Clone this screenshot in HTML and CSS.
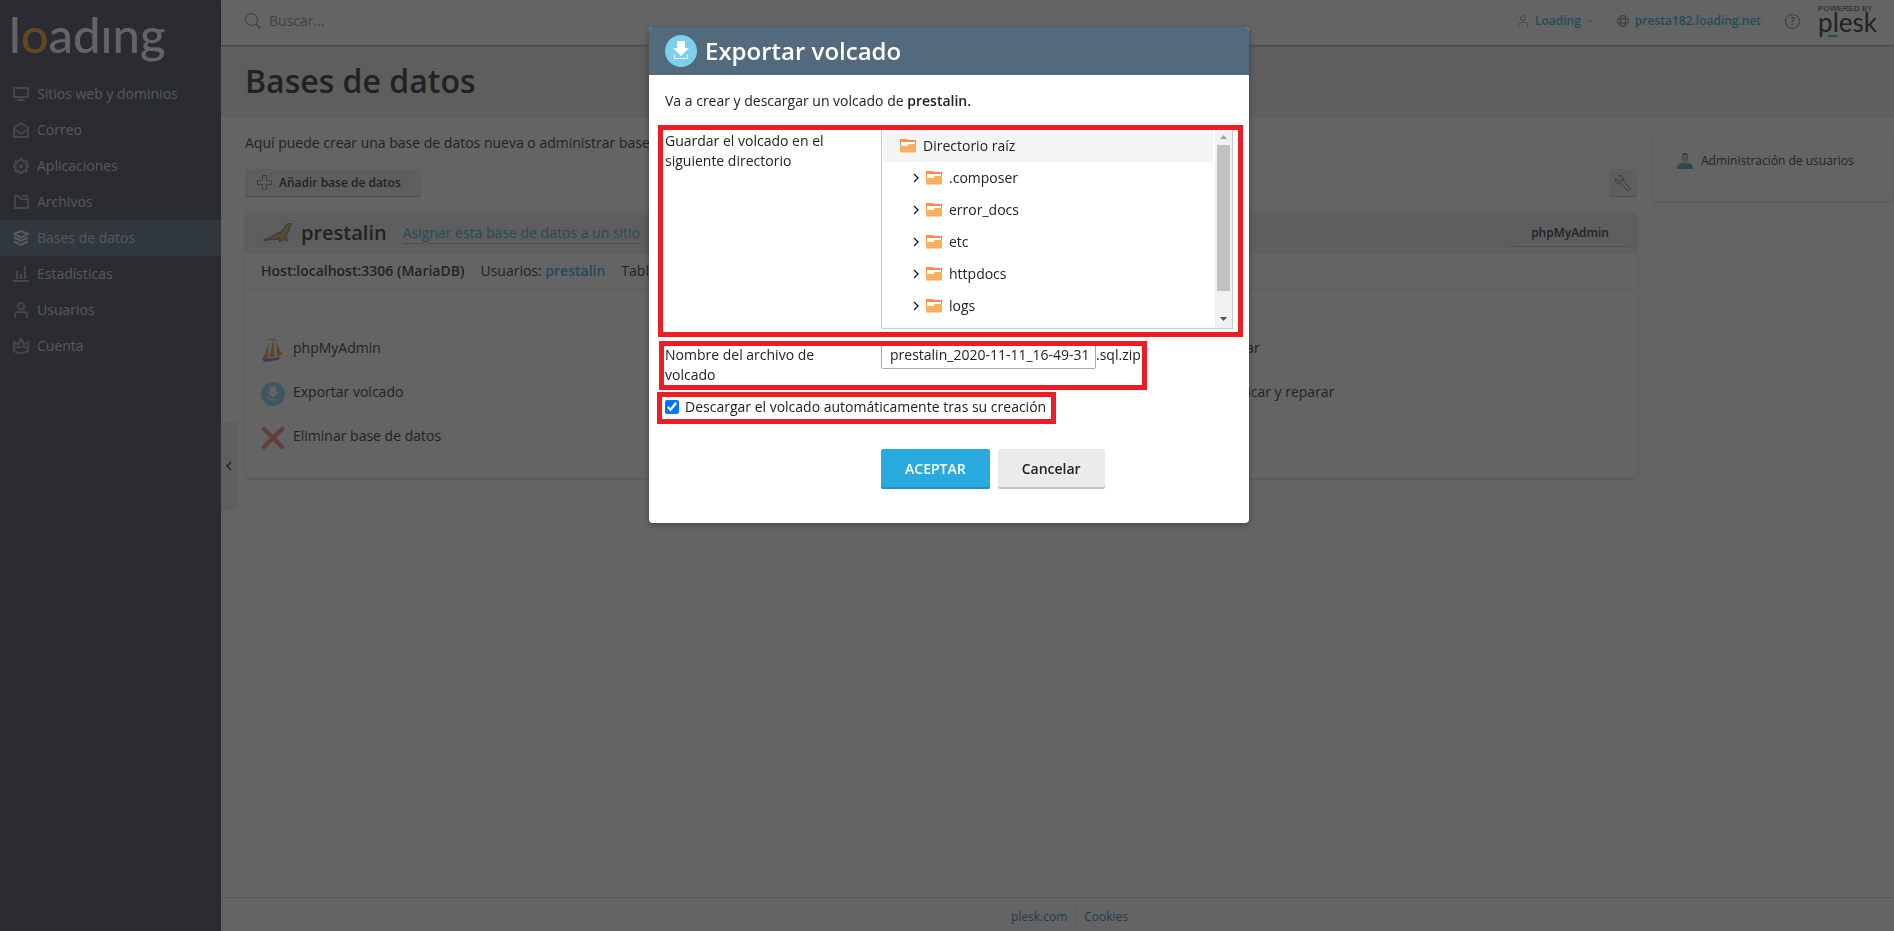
FILE: index.html
```html
<!DOCTYPE html>
<html lang="es">
  <head>
    <meta charset="UTF-8" />
    <meta name="viewport" content="width=device-width, initial-scale=1.0" />
    <title>Bases de datos - Plesk</title>
    <link rel="stylesheet" href="styles.css">
  </head>

  <body>
    <!-- shared icons -->
    <svg class="sprite" aria-hidden="true">
      <symbol id="download" viewBox="0 0 32 32">
        <circle cx="16" cy="16" r="16" fill="#7dcfee" />
        <path d="M12 6h8v7h4l-8 8-8-8h4z" fill="#fff" />
        <path d="M9.500 19.500v4h13v-4" fill="none" stroke="#fff" />
      </symbol>
      <symbol id="folder" viewBox="0 0 16 14">
        <path d="M0 0h7l1 1h8v6H0z" fill="#f98b53" />
        <path d="M1 3h14v4H1z" fill="#fff" />
        <path d="M0 7h7l2-2h7v8.500H0z" fill="#ffae5c" />
      </symbol>
      <symbol id="chevron" viewBox="0 0 6 10">
        <path d="M1 1l4 4-4 4" fill="none" stroke="#222" stroke-width="1.400" />
      </symbol>
      <symbol id="person" viewBox="0 0 16 16">
        <circle cx="8" cy="4" r="3.300" />
        <path d="M2 16v-2.500c0-2 1.500-3.500 3.500-3.500h5c2 0 3.500 1.500 3.500 3.500V16" />
      </symbol>
    </svg>

    <div class="page">
      <aside class="sidebar">
        <a class="logo" href="#">l<span class="logo-ring">o</span>adıng</a>
        <nav class="nav">
          <a class="nav-item" href="#">
            <svg class="nav-icon" viewBox="0 0 16 16"><path d="M1 2h14v9H1zM4 14h8" /></svg>Sitios web y dominios</a>
          <a class="nav-item" href="#">
            <svg class="nav-icon" viewBox="0 0 16 16"><path d="M1 15V5.500L8 1l7 4.500V15zM1 7l7 5 7-5" /></svg>Correo</a>
          <a class="nav-item" href="#">
            <svg class="nav-icon" viewBox="0 0 16 16"><path d="M7 1h2l.5 2 1.500.6L13 2.500 14 4l-1.200 1.500.7 1.500 1.900.3v1.900l-2 .3-.6 1.500L14 12.500 12.600 14l-1.600-1.100-1.500.6L9 15.300H7l-.5-1.800-1.500-.6L3.400 14 2 12.500l1.200-1.500-.6-1.500-2-.3V7.300l2-.3.6-1.500L2 4l1.300-1.500L5 3.600 6.500 3z" /><circle cx="8" cy="8.200" r="1" /></svg>Aplicaciones</a>
          <a class="nav-item" href="#">
            <svg class="nav-icon" viewBox="0 0 16 16"><path d="M2 2h4l2 3h7v9H2zM9 2h6" /></svg>Archivos</a>
          <a class="nav-item active" href="#">
            <svg class="nav-icon" viewBox="0 0 16 16"><path d="M8 1l7 3-7 3.500L1 4zM1 7.500L8 11l7-3.500M1 11.500L8 15l7-3.500" /></svg>Bases de datos</a>
          <a class="nav-item" href="#">
            <svg class="nav-icon" viewBox="0 0 16 16"><path d="M0 15h16M4 13V5M8 13V8M12 13V0" /></svg>Estadísticas</a>
          <a class="nav-item" href="#">
            <svg class="nav-icon" viewBox="0 0 16 16"><use href="#person" /></svg>Usuarios</a>
          <a class="nav-item" href="#">
            <svg class="nav-icon" viewBox="0 0 16 16"><path d="M1 13V4l4 2.500L8 1l3 5.500L15 4v9c-3 2.700-11 2.700-14 0zM1 10.500c4-2 10-2 14 0" /></svg>Cuenta</a>
        </nav>
      </aside>

      <div class="main">
        <button class="collapse" aria-label="Contraer">
          <svg width="6" height="10" viewBox="0 0 6 10"><path d="M5 1L1 5l4 4" fill="none" stroke="#222" stroke-width="1.400" /></svg>
        </button>

        <header class="topbar">
          <label class="search">
            <svg class="icon" width="16" height="16" viewBox="0 0 16 16"><circle cx="6.500" cy="6.500" r="6" /><path d="M10.500 11l4 4.500 1-1-4.500-4" /></svg>
            <input type="search" placeholder="Buscar..." aria-label="Buscar">
          </label>
          <div class="account">
            <a class="account-link user" href="#">
              <svg class="icon" width="12" height="12" viewBox="0 0 16 16"><use href="#person" /></svg>
              Loading
              <svg class="icon" width="6" height="4" viewBox="0 0 6 4"><path d="M.5.500L3 3 5.500.500" /></svg>
            </a>
            <a class="account-link" href="#">
              <svg class="icon" width="12" height="12" viewBox="0 0 12 12"><circle cx="6" cy="6" r="5.500" /><ellipse cx="6" cy="6" rx="2.500" ry="5.500" /><path d="M1 4h10M1 8h10" /></svg>
              presta182.loading.net
            </a>
            <a class="help" href="#" aria-label="Ayuda">?</a>
            <a class="plesk" href="#"><small>POWERED BY</small><span>plesk</span></a>
          </div>
        </header>

        <div class="title-band">
          <h1>Bases de datos</h1>
        </div>

        <div class="content">
          <main class="databases">
            <p class="intro">Aquí puede crear una base de datos nueva o administrar bases de datos existentes.</p>
            <div class="toolbar">
              <button class="btn-small">
                <svg class="icon" width="16" height="16" viewBox="0 0 16 16"><path d="M5.500.500h4v5h5v4h-5v5h-4v-5h-5v-4h5z" /></svg>
                Añadir base de datos
              </button>
              <button class="btn-small btn-icon" aria-label="Ajustes">
                <svg class="icon" width="18" height="18" viewBox="0 0 18 18"><path d="M5 1.500l3 3L7.500 7 5 7.500l-3.500-3C.5 8 3.500 10.500 7 9.500l6 6.500c2 1.500 4-.5 2.500-2.500L9.500 7.500C10.500 3.500 8.500 1 5 1.500z" /></svg>
              </button>
            </div>

            <section class="card">
              <div class="card-head">
                <svg width="30" height="20" viewBox="0 0 30 20"><path d="M.5 17C3 15.500 6 15.500 8 14c4-3.500 9-4 12-7 2-2 2-5 4-6 1.500-.6 3-.6 5-.6-.3 1.600-1.600 2-2.300 3.600-.7 3.500-1.700 7-3.700 9.500l1.500 4c-1.500.3-2.800-.7-3.500-2-1 1.500-2.500 3-5 3.500l1-3c-4 .7-7 .2-10 .7-2 .5-4 1.300-6.500.3z" fill="#d6a26c" stroke="#40566b" stroke-width=".8" /></svg>
                <h2>prestalin</h2>
                <a class="assign" href="#">Asignar esta base de datos a un sitio</a>
                <button class="btn-small btn-admin">phpMyAdmin</button>
              </div>
              <div class="card-info">
                <b>Host:localhost:3306 (MariaDB)</b>
                <span>Usuarios: <a href="#">prestalin</a></span>
                <span>Tablas: 0</span>
              </div>
              <div class="actions">
                <a class="action" href="#">
                  <svg width="24" height="24" viewBox="0 0 24 24"><path d="M8 4l-1 16H2C4 15 6 10 8 4zM12 1l2 18H8c2-6 3-12 4-18zM15 3c2 6 4 10 7 13l-6 3z" fill="#e8994a" /><path d="M7 2l5-1M12 1l4 2" stroke="#999" /><path d="M1 20c8 1 12 0 19-1l-3 3-14 2z" fill="#7478c4" /></svg>
                  phpMyAdmin</a>
                <a class="action action-last" href="#">
                  <svg width="24" height="24" viewBox="0 0 24 24"><path d="M3 3h12v14H3zM9 7h12v14H9z" fill="#7dcfee" /></svg>
                  Copiar</a>
                <a class="action" href="#">
                  <svg width="24" height="24"><use href="#download" /></svg>
                  Exportar volcado</a>
                <a class="action action-last" href="#">
                  <svg width="24" height="24" viewBox="0 0 24 24"><path d="M4 12l6 6L20 6" fill="none" stroke="#7dcfee" stroke-width="4" /></svg>
                  Verificar y reparar</a>
                <a class="action" href="#">
                  <svg width="24" height="24" viewBox="0 0 24 24"><path d="M3 3l18 18M21 3L3 21" stroke="#f58078" stroke-width="4.500" stroke-linecap="round" /></svg>
                  Eliminar base de datos</a>
              </div>
            </section>
          </main>

          <aside class="side-card">
            <a class="side-link" href="#">
              <svg width="16" height="16" viewBox="0 0 16 16"><path d="M0 16c0-4 2-5.500 5-6h6c3 .5 5 2 5 6z" fill="#3aa5d0" /><path d="M5 3h6v5l-1.500 2v1h-3v-1L5 8z" fill="#e5b694" /><path d="M5 4c-.5-5 6.500-5 6 0l-1-2H6z" fill="#62422f" /></svg>
              Administración de usuarios</a>
          </aside>
        </div>

        <footer class="footer">
          <a href="#">plesk.com</a>
          <a href="#">Cookies</a>
        </footer>
      </div>
    </div>

    <div class="overlay">
      <form class="modal" role="dialog" aria-labelledby="modal-title">
        <div class="modal-head">
          <svg width="32" height="32"><use href="#download" /></svg>
          <h2 id="modal-title">Exportar volcado</h2>
        </div>
        <div class="modal-body">
          <p class="modal-text">Va a crear y descargar un volcado de <b>prestalin.</b></p>

          <div class="form-row marked mark-tree">
            <div class="form-label">Guardar el volcado en el siguiente directorio</div>
            <div class="tree">
              <ul class="tree-list">
                <li class="tree-item root"><svg width="16" height="14"><use href="#folder" /></svg>Directorio raíz</li>
                <li class="tree-item"><svg width="6" height="10"><use href="#chevron" /></svg><svg width="16" height="14"><use href="#folder" /></svg>.composer</li>
                <li class="tree-item"><svg width="6" height="10"><use href="#chevron" /></svg><svg width="16" height="14"><use href="#folder" /></svg>error_docs</li>
                <li class="tree-item"><svg width="6" height="10"><use href="#chevron" /></svg><svg width="16" height="14"><use href="#folder" /></svg>etc</li>
                <li class="tree-item"><svg width="6" height="10"><use href="#chevron" /></svg><svg width="16" height="14"><use href="#folder" /></svg>httpdocs</li>
                <li class="tree-item"><svg width="6" height="10"><use href="#chevron" /></svg><svg width="16" height="14"><use href="#folder" /></svg>logs</li>
              </ul>
              <div class="scrollbar">
                <svg width="7" height="4" viewBox="0 0 7 4"><path d="M0 4l3.500-4L7 4z" fill="#a3a3a3" /></svg>
                <div class="thumb"></div>
                <svg width="7" height="4" viewBox="0 0 7 4"><path d="M0 0h7L3.500 4z" fill="#505050" /></svg>
              </div>
            </div>
          </div>

          <div class="form-row marked mark-name">
            <label class="form-label" for="file-name">Nombre del archivo de volcado</label>
            <div class="file-field">
              <input class="file-name" id="file-name" type="text" value="prestalin_2020-11-11_16-49-31">
              <span>.sql.zip</span>
            </div>
          </div>

          <label class="check-row marked mark-check">
            <input type="checkbox" checked>
            Descargar el volcado automáticamente tras su creación
          </label>

          <div class="buttons">
            <button class="btn btn-primary" type="submit">ACEPTAR</button>
            <button class="btn" type="button">Cancelar</button>
          </div>
        </div>
      </form>
    </div>
  </body>
</html>
```

FILE: styles.css
```css
* {
  box-sizing: border-box;
}
body {
  margin: 0;
  font-family: 'Open Sans', sans-serif;
  font-size: 14px;
  line-height: 20px;
  color: #222;
  background-color: white;
}
h1,
h2,
p,
ul {
  margin: 0;
  padding: 0;
}
a {
  color: #28aade;
  text-decoration: none;
}
b {
  font-weight: 600;
}
svg {
  flex: none;
}
button,
input {
  font: inherit;
  color: inherit;
}
.sprite {
  position: absolute;
  width: 0;
  height: 0;
}
.icon {
  fill: none;
  stroke: #777;
}

.page {
  display: flex;
  min-height: 100vh;
}

/* sidebar */
.sidebar {
  width: 221px;
  flex: none;
  background-color: #3c4456;
}
.logo {
  display: block;
  height: 76px;
  padding-left: 9px;
  font-family: Lato, sans-serif;
  font-size: 49px;
  font-weight: 500;
  line-height: 68px;
  color: white;
}
.logo-ring {
  color: #f9a01b;
}
.nav-item {
  display: flex;
  align-items: center;
  gap: 8px;
  height: 36px;
  padding-left: 13px;
  color: #d5d7da;
}
.nav-icon {
  width: 16px;
  height: 16px;
  fill: none;
  stroke: #949aa4;
  stroke-width: 2;
}
.nav-item.active {
  background-color: #516a7c;
}
.active .nav-icon {
  stroke: #e0e0e0;
}

/* top bar */
.main {
  position: relative;
  display: flex;
  flex: 1;
  flex-direction: column;
}
.collapse {
  position: absolute;
  top: 50%;
  left: 0;
  width: 16px;
  height: 88px;
  padding: 0;
  transform: translateY(-50%);
  border: 0;
  border-radius: 0 3px 3px 0;
  background-color: #ebebeb;
}
.topbar {
  display: flex;
  justify-content: space-between;
  height: 45px;
  padding: 0 17px 0 24px;
  box-shadow: 0 1px 2px rgba(0, 0, 0, 0.4);
  z-index: 1;
}
.search {
  display: flex;
  align-items: center;
  gap: 8px;
  height: 42px;
}
.search input {
  border: 0;
  padding: 0;
  outline: 0;
  background: none;
}
.search input::placeholder {
  color: #888;
}
.account {
  display: flex;
  gap: 24px;
  font-size: 12px;
  font-weight: 600;
}
.account-link {
  display: flex;
  align-items: center;
  gap: 6px;
  height: 42px;
}
.help {
  width: 15px;
  height: 15px;
  margin-top: 14px;
  border: 1px solid #666;
  border-radius: 50%;
  font-size: 10px;
  line-height: 13px;
  text-align: center;
  color: #666;
}
.plesk {
  display: flex;
  flex-direction: column;
  margin-left: -6px;
  padding-top: 5px;
  font-family: Lato, sans-serif;
  font-weight: 400;
  color: #222;
}
.plesk small {
  font-family: 'Liberation Sans', sans-serif;
  font-size: 8px;
  line-height: 8px;
}
.plesk span {
  font-size: 26px;
  line-height: 18px;
}
.plesk::after {
  content: '';
  width: 10px;
  height: 2px;
  margin: 4px 0 0 10px;
  background-color: #28bcdc;
}

/* content */
.title-band {
  height: 72px;
  padding: 12px 24px;
  background-color: #ebebeb;
}
.title-band h1 {
  font-size: 32px;
  font-weight: 600;
  line-height: 48px;
}
.content {
  display: flex;
  flex: 1;
  align-items: flex-start;
  gap: 16px;
  padding: 16px 1px 16px 24px;
}
.databases {
  flex: 1;
}
.toolbar {
  display: flex;
  justify-content: space-between;
  margin: 16px 0;
}
.btn-small {
  display: flex;
  align-items: center;
  gap: 6px;
  height: 28px;
  padding: 0 20px 0 12px;
  border: 0;
  border-radius: 2px;
  font-size: 12px;
  font-weight: 600;
  background-color: #ebebeb;
  box-shadow: inset 0 -1px #bbb;
}
.btn-icon {
  padding: 0 5px;
}
.btn-admin {
  margin-left: auto;
  padding: 0 20px;
}
.card,
.side-card {
  border-radius: 4px;
  background-color: white;
  box-shadow: 0 1px 3px rgba(0, 0, 0, 0.2);
}
.card-head {
  display: flex;
  align-items: center;
  gap: 8px;
  height: 40px;
  padding: 0 8px 0 18px;
  border-radius: 4px 4px 0 0;
  background-color: #ebebeb;
}
.card-head h2 {
  font-size: 20px;
  font-weight: 600;
}
.assign {
  margin-left: 8px;
  border-bottom: 1px dotted #28aade;
}
.card-info {
  display: flex;
  gap: 16px;
  padding: 8px 16px;
  border-bottom: 1px solid #e2e2e2;
}
.card-info a {
  font-weight: 600;
}
.actions {
  display: grid;
  grid-template-columns: repeat(3, 1fr);
  gap: 20px 10px;
  padding: 48px 0 28px 16px;
}
.action {
  display: flex;
  gap: 8px;
  height: 24px;
  color: #222;
}
.action-last {
  grid-column: 3;
}
.side-card {
  width: 240px;
  padding: 18px 24px 30px;
}
.side-link {
  display: flex;
  align-items: center;
  gap: 8px;
  font-size: 12px;
  color: #222;
}
.footer {
  display: flex;
  justify-content: center;
  height: 34px;
  padding: 9px 0 0 24px;
  border-top: 1px solid #dadada;
  font-size: 12px;
}
.footer a {
  height: 18px;
  padding: 0 8px;
  color: #1c7aa3;
}
.footer a + a {
  border-left: 1px solid #dadada;
}

/* dialog */
.overlay {
  position: fixed;
  inset: 0;
  display: flex;
  align-items: flex-start;
  justify-content: center;
  padding: 27px 0 0 4px;
  background-color: rgba(34, 34, 34, 0.7);
  z-index: 10;
}
.modal {
  width: 600px;
  border-radius: 4px;
  background-color: white;
  box-shadow: 0 2px 6px rgba(0, 0, 0, 0.3);
}
.modal-head {
  display: flex;
  align-items: center;
  gap: 8px;
  height: 48px;
  padding: 0 16px;
  border-radius: 4px 4px 0 0;
  color: white;
  background-color: #536a7d;
}
.modal-head h2 {
  font-size: 24px;
  font-weight: 600;
  line-height: 32px;
}
.modal-body {
  padding: 16px 16px 34px;
}
.modal-text {
  margin-bottom: 16px;
}
.form-row {
  display: grid;
  grid-template-columns: 192px 1fr;
  gap: 24px;
  margin-bottom: 12px;
}
.form-label {
  padding-top: 4px;
}
.tree {
  display: flex;
  height: 202px;
  border: 1px solid #ccc;
}
.tree-list {
  flex: 1;
  padding: 2px 2px 0 1px;
  list-style: none;
}
.tree-item {
  display: flex;
  align-items: center;
  gap: 7px;
  height: 32px;
  padding-left: 30px;
}
.tree-item.root {
  padding-left: 17px;
  background-color: #f5f5f5;
}
.scrollbar {
  display: flex;
  flex-direction: column;
  align-items: center;
  width: 17px;
  padding: 7px 0;
  background-color: #f1f1f1;
}
.thumb {
  width: 13px;
  height: 146px;
  margin: 6px 0 auto;
  background-color: #c1c1c1;
}
.file-field {
  display: flex;
  align-items: flex-start;
  line-height: 28px;
}
.file-name {
  width: 215px;
  height: 28px;
  padding: 0 8px;
  border: 1px solid #aaa;
  border-radius: 2px;
}
.check-row {
  display: flex;
  align-items: center;
  gap: 6px;
  width: fit-content;
}
.check-row input {
  width: 14px;
  height: 14px;
  margin: 0;
  accent-color: #0075ff;
}
.buttons {
  display: flex;
  gap: 8px;
  margin: 32px 0 0 216px;
}
.btn {
  height: 40px;
  padding: 0 24px;
  border: 0;
  border-radius: 2px;
  font-weight: 600;
  background-color: #ebebeb;
  box-shadow: inset 0 -2px #c4c4c4;
}
.btn-primary {
  color: white;
  background-color: #28aade;
  box-shadow: inset 0 -2px #2290bd;
}

/* red highlight frames drawn over the form */
.marked {
  position: relative;
}
.marked::after {
  content: '';
  position: absolute;
  border: 5px solid #ee1c24;
  pointer-events: none;
}
.mark-tree::after {
  inset: -2px -10px -8px -7px;
}
.mark-name::after {
  inset: 0 86px -5px -6px;
}
.mark-check::after {
  inset: -5px -10px -7px -8px;
}
```
